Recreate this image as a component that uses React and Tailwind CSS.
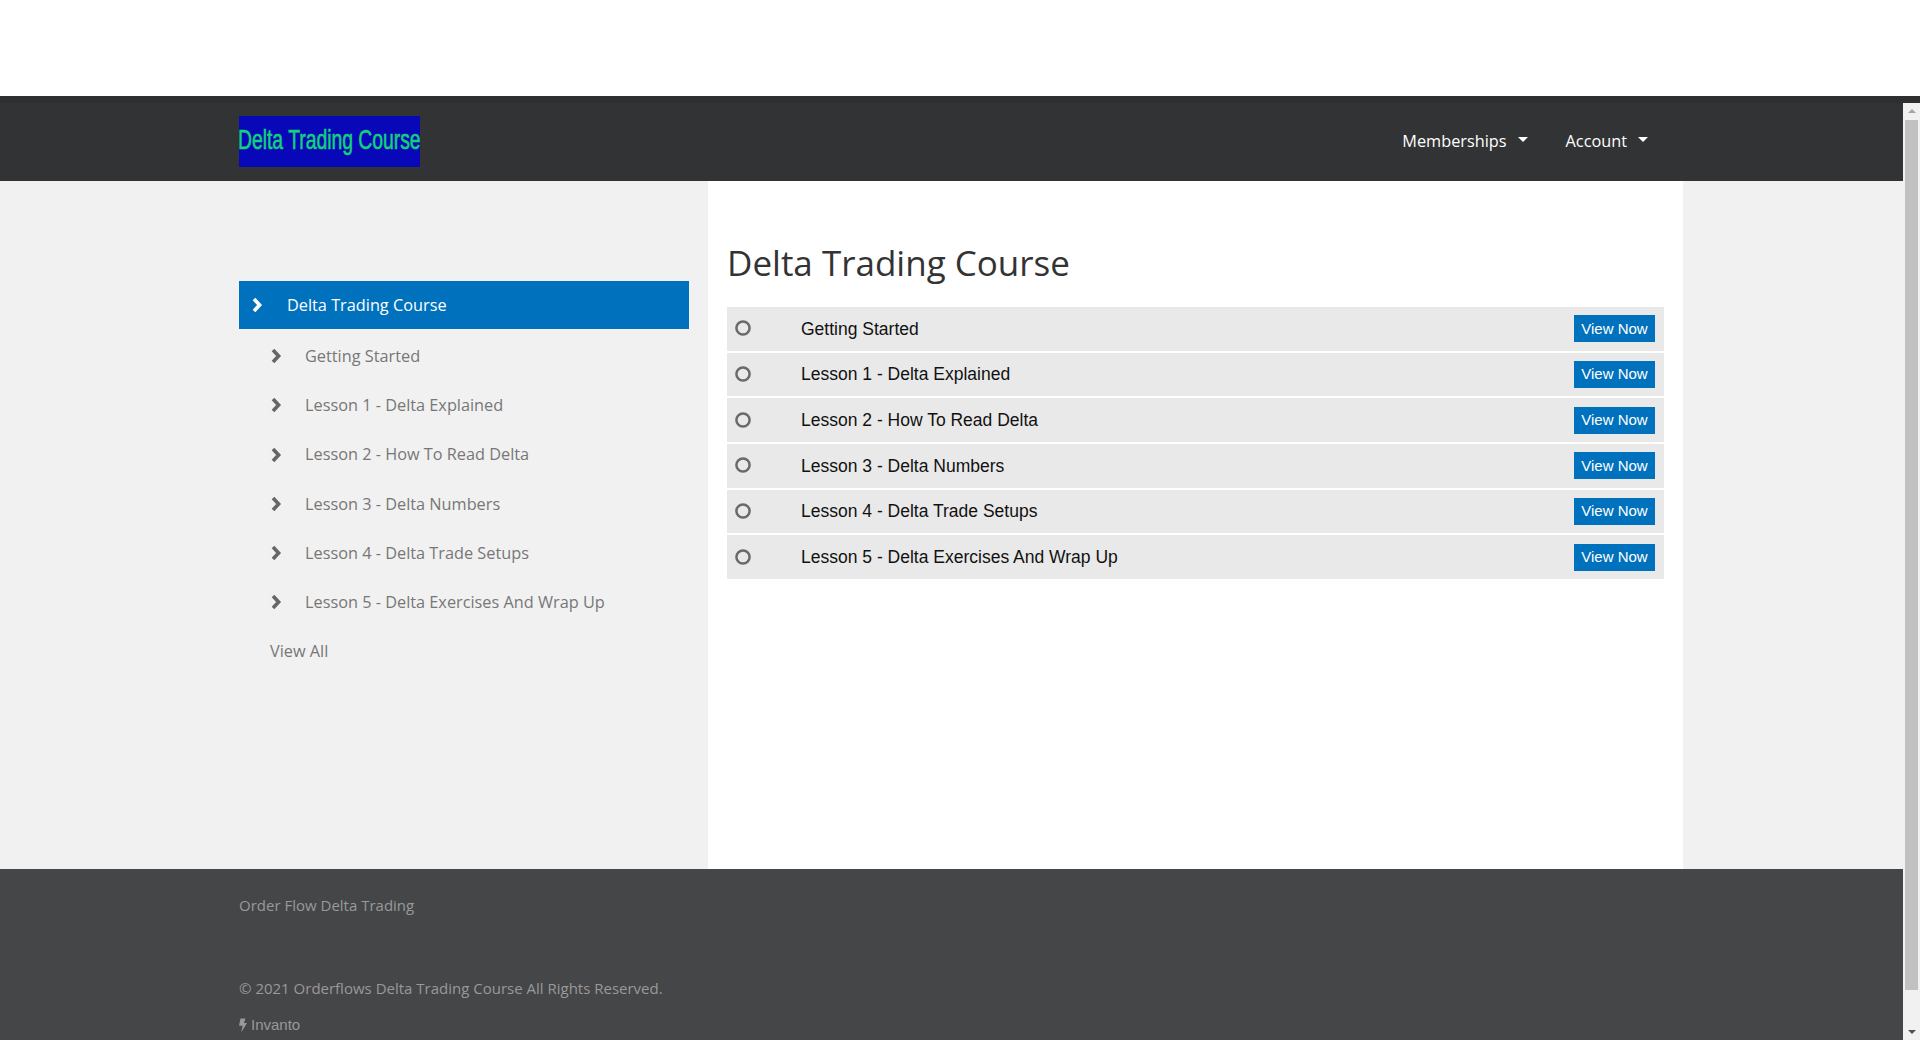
const sans = "font-['Open_Sans',sans-serif]";
const arial = "font-['Liberation_Sans',Arial,sans-serif]";

const lessons = [
  "Getting Started",
  "Lesson 1 - Delta Explained",
  "Lesson 2 - How To Read Delta",
  "Lesson 3 - Delta Numbers",
  "Lesson 4 - Delta Trade Setups",
  "Lesson 5 - Delta Exercises And Wrap Up",
];

const Chevron = ({ className }) => (
  <svg viewBox="0 0 12 16" className={`w-[12px] h-[16px] shrink-0 ${className}`} fill="none" stroke="currentColor" strokeWidth="3.6" strokeLinejoin="miter">
    <polyline points="3,2 8.6,8 3,14" />
  </svg>
);

const Bolt = () => (
  <svg viewBox="0 0 8 14" className="w-[8px] h-[15px] mr-[4px] fill-current">
    <path d="M1.5 0h5L4.9 4.6H8L2.2 14l1.4-6.8H0z" />
  </svg>
);

const Ring = () => (
  <svg viewBox="0 0 16 16" className="w-[16px] h-[16px] shrink-0 mt-[-1px]" fill="none" stroke="#6a6a6a" strokeWidth="2.5">
    <circle cx="8" cy="8" r="6.6" />
  </svg>
);

const Caret = () => (
  <span className="ml-[11px] mt-[-3px] w-0 h-0 border-x-[5.5px] border-x-transparent border-t-[5.5px] border-t-white" />
);

const Header = () => (
  <header className="h-[85px] bg-[#323335] border-t-[7px] border-[#2e2f31] flex items-center pl-[239px] pr-[272px] shrink-0">
    <div className="w-[181px] h-[51px] mt-[-2px] bg-[#0808b8] flex items-center justify-center overflow-hidden">
      <span className={`${arial} shrink-0 text-[#12d27a] text-[28px] whitespace-nowrap scale-x-[0.69] mt-[-3px] [-webkit-text-stroke:0.6px_#12d27a]`}>
        Delta Trading Course
      </span>
    </div>
    <nav className={`${sans} ml-auto flex items-center text-white text-[16.3px] mt-[-2px]`}>
      <a className="flex items-center">
        Memberships
        <Caret />
      </a>
      <a className="flex items-center ml-[38px]">
        Account
        <Caret />
      </a>
    </nav>
  </header>
);

const Sidebar = () => (
  <aside className={`${sans} w-[708px] bg-[#f1f1f1] pl-[239px] pr-[19px] pt-[100px] text-[16.3px]`}>
    <div className="h-[48px] bg-[#0071bc] text-white flex items-center pl-[12px]">
      <Chevron />
      <span className="ml-[24px]">Delta Trading Course</span>
    </div>
    <ul className="text-[#777777] pt-[2.6px]">
      {lessons.map((name) => (
        <li key={name} className="h-[49.2px] flex items-center pl-[31px]">
          <Chevron className="text-[#666666]" />
          <span className="ml-[23px]">{name}</span>
        </li>
      ))}
      <li className="h-[49.2px] flex items-center pl-[31px]">View All</li>
    </ul>
  </aside>
);

const Lessons = () => (
  <main className="w-[975px] bg-white px-[19px] pt-[59px]">
    <h1 className={`${sans} text-[35px] leading-[46px] text-[#333333]`}>Delta Trading Course</h1>
    <div className={`${arial} mt-[21px]`}>
      {lessons.map((name) => (
        <div key={name} className="h-[43.7px] mb-[2px] bg-[#e9e9e9] flex items-center pl-[8px] pr-[9px]">
          <Ring />
          <span className="ml-[50px] text-[17.5px] text-[#111111]">{name}</span>
          <a className="ml-auto w-[81px] h-[27px] bg-[#0071bc] text-white text-[15px] flex items-center justify-center">
            View Now
          </a>
        </div>
      ))}
    </div>
  </main>
);

const Footer = () => (
  <footer className="h-[171px] bg-[#454648] pl-[239px] pt-[25px] text-[#999999] shrink-0">
    <p className={`${sans} text-[15px] leading-[22px]`}>Order Flow Delta Trading</p>
    <p className={`${sans} text-[15px] leading-[22px] mt-[61px]`}>© 2021 Orderflows Delta Trading Course All Rights Reserved.</p>
    <p className={`${arial} text-[15px] leading-[18px] mt-[17px] flex items-center`}>
      <Bolt />
      Invanto
    </p>
  </footer>
);

const Scrollbar = () => (
  <div className="absolute right-0 top-[103px] bottom-0 w-[17px] bg-[#f1f1f1] flex flex-col items-center">
    <span className="mt-[6px] w-0 h-0 border-x-[4px] border-x-transparent border-b-[4px] border-b-[#a3a3a3]" />
    <span className="mt-[7px] w-[13px] h-[870px] bg-[#c1c1c1]" />
    <span className="mt-auto mb-[6px] w-0 h-0 border-x-[4px] border-x-transparent border-t-[4px] border-t-[#505050]" />
  </div>
);

const App = () => {
  return (
    <div className="relative h-[1040px] overflow-hidden bg-white pt-[96px] flex flex-col">
      <Header />
      <div className="flex flex-1 bg-[#f1f1f1]">
        <Sidebar />
        <Lessons />
      </div>
      <Footer />
      <Scrollbar />
    </div>
  );
};

export default App;
